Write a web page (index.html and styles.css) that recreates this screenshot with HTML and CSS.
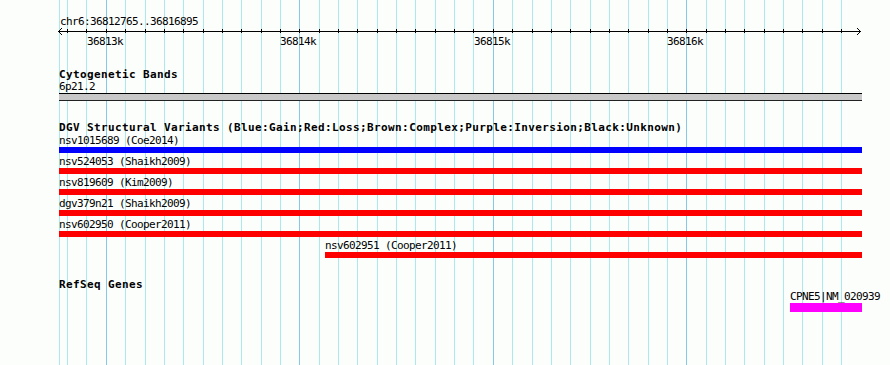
FILE: index.html
```html
<!DOCTYPE html>
<html lang="en">
  <head>
    <meta charset="UTF-8" />
    <title>chr6:36812765..36816895</title>
    <link rel="stylesheet" href="styles.css">
  </head>
  <body>
    <div class="view">
      <svg class="grid" id="grid" width="890" height="365"></svg>

      <div class="ruler">
        <div class="ruler-title">chr6:36812765..36816895</div>
        <svg class="axis" id="axis" width="890" height="6"></svg>
        <div class="ticks">
          <span class="tick-label" style="left: 87px">36813k</span>
          <span class="tick-label" style="left: 280px">36814k</span>
          <span class="tick-label" style="left: 474px">36815k</span>
          <span class="tick-label" style="left: 667px">36816k</span>
        </div>
      </div>

      <section class="track">
        <div class="track-title">Cytogenetic Bands</div>
        <div class="feature" style="margin-left: 59px; width: 803px">
          <div class="feature-label">6p21.2</div>
          <div class="band"></div>
        </div>
      </section>

      <section class="track variants">
        <div class="track-title">DGV Structural Variants (Blue:Gain;Red:Loss;Brown:Complex;Purple:Inversion;Black:Unknown)</div>
        <div class="feature variant" style="margin-left: 59px; width: 803px">
          <div class="feature-label">nsv1015689 (Coe2014)</div>
          <div class="bar gain"></div>
        </div>
        <div class="feature variant" style="margin-left: 59px; width: 803px">
          <div class="feature-label">nsv524053 (Shaikh2009)</div>
          <div class="bar loss"></div>
        </div>
        <div class="feature variant" style="margin-left: 59px; width: 803px">
          <div class="feature-label">nsv819609 (Kim2009)</div>
          <div class="bar loss"></div>
        </div>
        <div class="feature variant" style="margin-left: 59px; width: 803px">
          <div class="feature-label">dgv379n21 (Shaikh2009)</div>
          <div class="bar loss"></div>
        </div>
        <div class="feature variant" style="margin-left: 59px; width: 803px">
          <div class="feature-label">nsv602950 (Cooper2011)</div>
          <div class="bar loss"></div>
        </div>
        <div class="feature variant" style="margin-left: 325px; width: 537px">
          <div class="feature-label">nsv602951 (Cooper2011)</div>
          <div class="bar loss"></div>
        </div>
      </section>

      <section class="track">
        <div class="track-title">RefSeq Genes</div>
        <div class="feature" style="margin-left: 790px; width: 72px">
          <div class="feature-label">CPNE5|NM_020939</div>
          <div class="bar gene"></div>
        </div>
      </section>
    </div>

    <script>
      // 100bp grid, 36812800..36816800, major line every 1kb
      function gridX(n) {
        return Math.round(106 + 19.35 * n - 0.2) + 0.5;
      }

      const grid = document.getElementById("grid");
      const axis = document.getElementById("axis");
      let gridLines = '<line class="minor" x1="59.5" y1="0" x2="59.5" y2="365" />';
      let axisLines =
        '<line class="axis-line" x1="58" y1="3.5" x2="861" y2="3.5" />' +
        '<polyline class="axis-line" points="62,0 58.5,3.5 62,7" />' +
        '<polyline class="axis-line" points="857,0 860.5,3.5 857,7" />';

      for (let n = -2; n <= 38; n++) {
        const x = gridX(n);
        const cls = n % 10 === 0 ? "major" : "minor";
        gridLines += `<line class="${cls}" x1="${x}" y1="0" x2="${x}" y2="365" />`;
        axisLines += `<line class="axis-line" x1="${x}" y1="1" x2="${x}" y2="5" />`;
      }

      grid.innerHTML = gridLines;
      axis.innerHTML = axisLines;
    </script>
  </body>
</html>
```

FILE: styles.css
```css
body {
  margin: 0;
  background: #fff;
}
.view {
  position: relative;
  width: 890px;
  height: 365px;
  overflow: hidden;
  background: #fcfefc;
  color: #000;
  font-family: "DejaVu Sans Mono", monospace;
  font-size: 11px;
  line-height: 13px;
  letter-spacing: -0.62px;
}
.grid {
  position: absolute;
  top: 0;
  left: 0;
  shape-rendering: crispEdges;
}
.grid .minor {
  stroke: #ace9ef;
  stroke-width: 1;
}
.grid .major {
  stroke: #86c8e6;
  stroke-width: 1;
}
.ruler {
  position: relative;
}
.ruler-title {
  margin-top: 15px;
  margin-left: 60px;
  height: 13px;
  white-space: nowrap;
}
.axis {
  display: block;
  overflow: visible;
  shape-rendering: crispEdges;
}
.axis-line {
  stroke: #000;
  stroke-width: 1;
  fill: none;
}
.axis polyline {
  shape-rendering: auto;
}
.ticks {
  position: relative;
  height: 13px;
  margin-top: 1px;
}
.tick-label {
  position: absolute;
  top: 0;
  white-space: nowrap;
}
.track {
  position: relative;
  margin-top: 20px;
}
.track-title {
  margin-left: 59px;
  height: 12px;
  line-height: 13px;
  font-weight: bold;
  letter-spacing: 0.38px;
  white-space: nowrap;
}
.variants .track-title {
  height: 13px;
}
.feature-label {
  height: 13px;
  white-space: nowrap;
}
.variant {
  margin-bottom: 2px;
}
.band {
  height: 6px;
  background: #c8c8c8;
  border-top: 1px solid #000;
  border-bottom: 1px solid #222;
}
.bar {
  height: 6px;
}
.gain {
  background: #0000ff;
}
.loss {
  background: #ff0000;
}
.gene {
  height: 9px;
  background: #ff00ff;
}
```
